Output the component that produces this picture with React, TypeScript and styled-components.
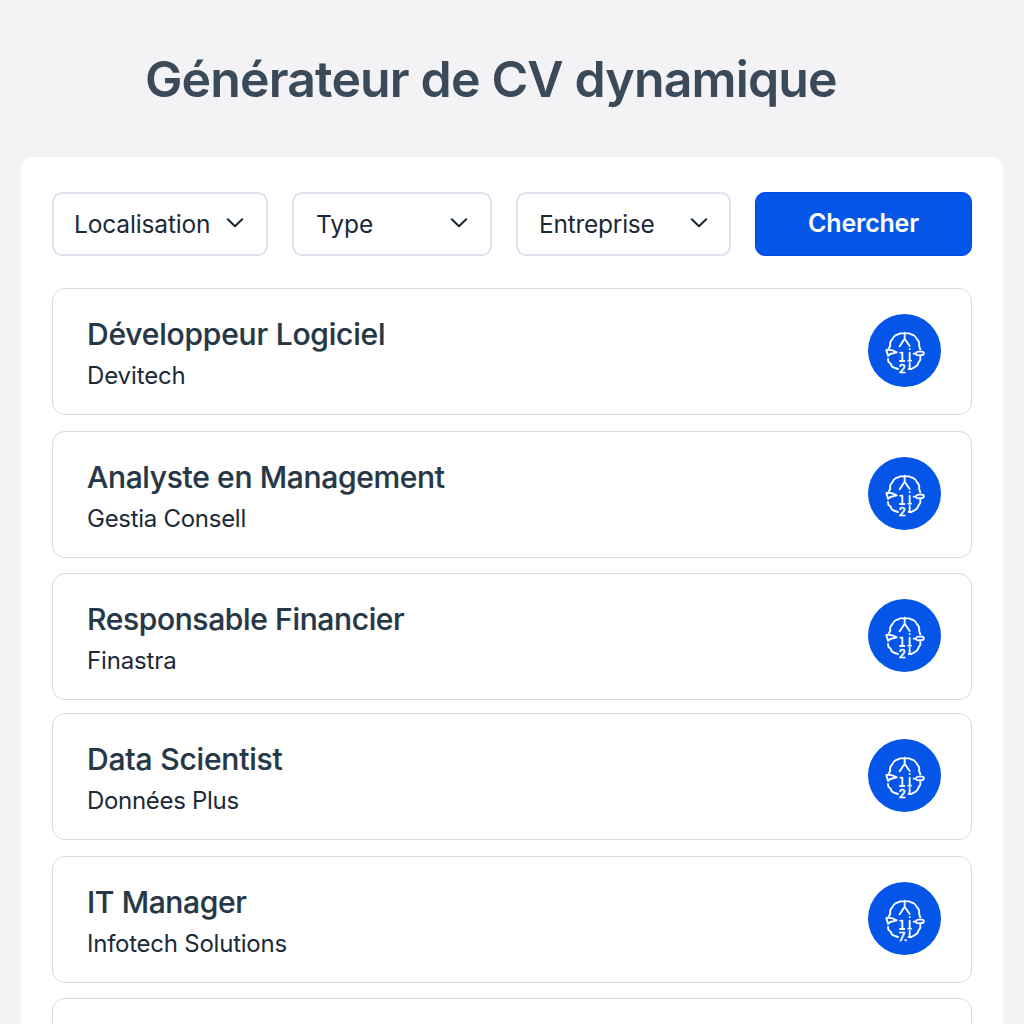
import React from "react";
import styled, { createGlobalStyle } from "styled-components";

const GlobalStyle = createGlobalStyle`
  *, *::before, *::after { box-sizing: border-box; }
  body {
    margin: 0;
    background: #f3f3f6;
    font-family: Inter, "Liberation Sans", sans-serif;
    color: #1c2a38;
  }
`;

const Page = styled.div`
  height: 1024px;
  overflow: hidden;
  display: flex;
  flex-direction: column;
`;

const PageTitle = styled.h1`
  flex: none;
  margin: 0;
  height: 157px;
  padding: 49px 0 0 145px;
  font-size: 50px;
  font-weight: 600;
  line-height: 60px;
  letter-spacing: -0.86px;
  color: #3a4a58;
  white-space: nowrap;
`;

const Panel = styled.main`
  flex: 1 0 auto;
  margin: 0 21px;
  padding: 35px 31px 0;
  background: #fff;
  border-radius: 12px 12px 0 0;
`;

const Filters = styled.div`
  display: grid;
  grid-template-columns: 216px 200px 215px 217px;
  column-gap: 24px;
  height: 64px;
`;

const Select = styled.button<{ $left: number; $right: number; $spacing: number }>`
  display: flex;
  align-items: center;
  justify-content: space-between;
  padding: 0 ${(p) => p.$right}px 1px ${(p) => p.$left}px;
  border: 2px solid #dde1ee;
  border-radius: 10px;
  background: #fff;
  font: 400 24.5px/32px Inter, sans-serif;
  letter-spacing: ${(p) => p.$spacing}px;
  color: #1c2a38;
`;

const SearchButton = styled.button`
  padding: 0 0 2px;
  border: 1px solid #0347dc;
  border-radius: 10px;
  background: #0556e8;
  color: #fff;
  font: 600 25px/32px Inter, sans-serif;
  letter-spacing: -0.2px;
`;

const List = styled.ul`
  margin: 32px 0 0;
  padding: 0;
  list-style: none;
`;

const Card = styled.li<{ $gap: number }>`
  display: flex;
  align-items: flex-start;
  justify-content: space-between;
  height: 127px;
  margin-bottom: ${(p) => p.$gap}px;
  padding: 25px 30px 0 34px;
  border: 1.5px solid #d6dbe8;
  border-radius: 13px;
  background: #fff;
`;

const JobTitle = styled.h2<{ $spacing: number }>`
  margin: 1px 0 0;
  font-size: 30px;
  font-weight: 500;
  line-height: 38px;
  letter-spacing: ${(p) => p.$spacing}px;
  color: #263746;
  -webkit-text-stroke: 0.2px #263746;
`;

const Company = styled.p<{ $spacing: number }>`
  margin: 7px 0 0;
  font-size: 24px;
  line-height: 32px;
  letter-spacing: ${(p) => p.$spacing}px;
`;

const Badge = styled.svg`
  display: block;
  width: 73px;
  height: 73px;
`;

const Chevron = () => (
  <svg width="18" height="11" viewBox="0 0 18 11" fill="none" stroke="#1c2a38" strokeWidth="2.1" strokeLinecap="round" strokeLinejoin="round">
    <path d="M1.8 1.3 9 8.3l7.2-7" />
  </svg>
);

const BrainBadge = ({ digit }: { digit: string }) => (
  <Badge viewBox="24 26 219 219">
    <circle cx="133.5" cy="135.5" r="109.5" fill="#0556e8" />
    <g fill="none" stroke="#fff" strokeWidth="5.6" strokeLinecap="round" strokeLinejoin="round">
      <path d="M134 82v18l-15 23M134 100l15 22" />
      <path d="M132 84h-11q-6 4-13 5-9 5-11 13-6 5-7 14l1 5-4 7" />
      <path d="M136 84h11q6 4 13 5 9 5 11 13 6 5 7 14l-1 5 4 11" />
      <path d="M79 134q14-3 31 7l-19 5-7 6M79 135l5 15" />
      <path d="M84 161l1 8 7 6q2 11 13 13l9 3" />
      <path d="M161 145h6q3-7 10-6h10q6 2 4 7-2 4-7 3M167 146q5 6 12 3" />
      <path d="M181 152v11l-5 8q-3 11-13 15l-9 5" />
      <path d="M121 142h6v23M120 167h13" />
      <path d="M149 142v21M145 166h8" />
      <path d="M149 131v.5M149 177v12M149 172v.5M146 191h7" />
    </g>
    <text x="116" y="203" fill="#fff" stroke="#fff" strokeWidth="1.5" fontFamily="Inter, sans-serif" fontSize="34" fontWeight="500">
      {digit}
    </text>
  </Badge>
);

const filters = [
  { label: "Localisation", left: 20, right: 22, spacing: -0.15 },
  { label: "Type", left: 22, right: 22, spacing: 0 },
  { label: "Entreprise", left: 21, right: 21, spacing: -0.25 },
];

const jobs = [
  { title: "Développeur Logiciel", company: "Devitech", gap: 16, digit: "2", ts: -0.2, cs: -0.12 },
  { title: "Analyste en Management", company: "Gestia Consell", gap: 15, digit: "2", ts: -0.33, cs: -0.28 },
  { title: "Responsable Financier", company: "Finastra", gap: 13, digit: "2", ts: -0.36, cs: -0.14 },
  { title: "Data Scientist", company: "Données Plus", gap: 16, digit: "2", ts: -0.18, cs: -0.3 },
  { title: "IT Manager", company: "Infotech Solutions", gap: 15, digit: "7.", ts: -0.36, cs: -0.24 },
];

export default function App() {
  return (
    <Page>
      <GlobalStyle />
      <PageTitle>Générateur de CV dynamique</PageTitle>
      <Panel>
        <Filters>
          {filters.map((f) => (
            <Select key={f.label} $left={f.left} $right={f.right} $spacing={f.spacing}>
              {f.label}
              <Chevron />
            </Select>
          ))}
          <SearchButton>Chercher</SearchButton>
        </Filters>
        <List>
          {jobs.map((j) => (
            <Card key={j.title} $gap={j.gap}>
              <div>
                <JobTitle $spacing={j.ts}>{j.title}</JobTitle>
                <Company $spacing={j.cs}>{j.company}</Company>
              </div>
              <BrainBadge digit={j.digit} />
            </Card>
          ))}
          <Card $gap={0} />
        </List>
      </Panel>
    </Page>
  );
}
